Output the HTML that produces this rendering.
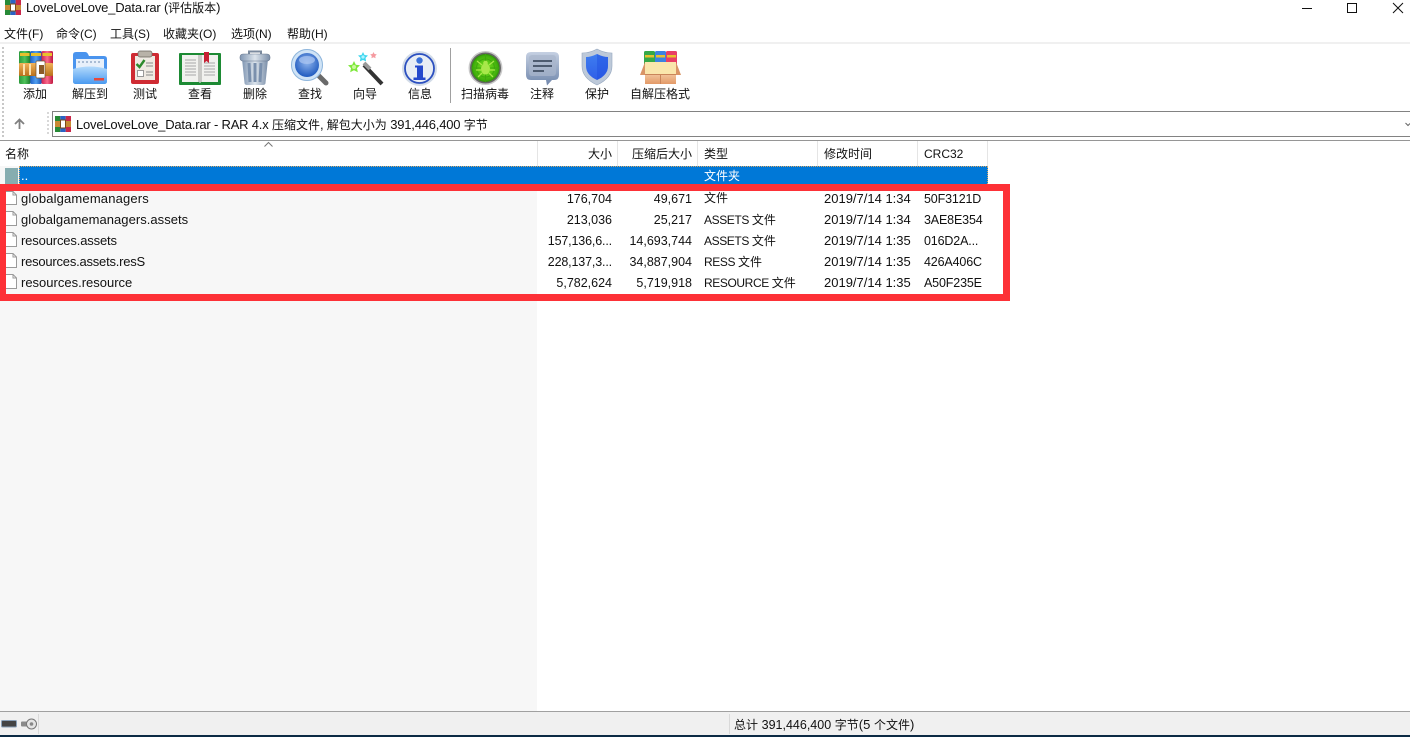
<!DOCTYPE html>
<html lang="zh">
<head>
<meta charset="utf-8">
<title>LoveLoveLove_Data.rar</title>
<style>
html,body{margin:0;padding:0;background:#fff;}
body{width:1410px;height:737px;position:relative;overflow:hidden;font-family:"Liberation Sans","Noto Sans CJK SC",sans-serif;font-size:13px;color:#111;}
.b{position:absolute;}
.t{position:absolute;white-space:nowrap;line-height:16px;height:16px;}
.c{font-size:12px;letter-spacing:0;}
.r{text-align:right;}
.n{font-size:12.5px;}
.k{font-size:12px;letter-spacing:-.4px;}
.h{font-size:12.5px;letter-spacing:-.15px;}
.tb{position:absolute;top:86px;font-size:12px;line-height:16px;text-align:center;white-space:nowrap;width:70px;}
svg{position:absolute;overflow:visible;}
</style>
</head>
<body>
<svg width="0" height="0" style="position:absolute">
<defs>
<linearGradient id="gG" x1="0" x2="1" y1="0" y2="0"><stop offset="0" stop-color="#2c9a3c"/><stop offset=".5" stop-color="#4fc35a"/><stop offset="1" stop-color="#1a7a2c"/></linearGradient>
<linearGradient id="gB" x1="0" x2="1" y1="0" y2="0"><stop offset="0" stop-color="#2060c8"/><stop offset=".5" stop-color="#50a0f0"/><stop offset="1" stop-color="#1a50b0"/></linearGradient>
<linearGradient id="gR" x1="0" x2="1" y1="0" y2="0"><stop offset="0" stop-color="#d02050"/><stop offset=".5" stop-color="#f86a8c"/><stop offset="1" stop-color="#c01840"/></linearGradient>
<linearGradient id="gO" x1="0" x2="0" y1="0" y2="1"><stop offset="0" stop-color="#f2b45a"/><stop offset="1" stop-color="#b8701c"/></linearGradient>
<linearGradient id="gF" x1="0" x2="0" y1="0" y2="1"><stop offset="0" stop-color="#b3dafc"/><stop offset="1" stop-color="#4a9af0"/></linearGradient>
<linearGradient id="gT" x1="0" x2="1" y1="0" y2="0"><stop offset="0" stop-color="#8096b2"/><stop offset=".5" stop-color="#dce4ec"/><stop offset="1" stop-color="#7a8ea8"/></linearGradient>
<radialGradient id="gL" cx=".5" cy=".4" r=".6"><stop offset="0" stop-color="#8fb4ec"/><stop offset="1" stop-color="#1f5abf"/></radialGradient>
<radialGradient id="gS" cx=".5" cy=".5" r=".55"><stop offset="0" stop-color="#7ce81e"/><stop offset=".8" stop-color="#3fae0c"/><stop offset="1" stop-color="#1f7005"/></radialGradient>
<linearGradient id="gC" x1="0" x2="0" y1="0" y2="1"><stop offset="0" stop-color="#c5d0e2"/><stop offset="1" stop-color="#6f86ab"/></linearGradient>
<linearGradient id="gP" x1="0" x2="0" y1="0" y2="1"><stop offset="0" stop-color="#3e7df0"/><stop offset="1" stop-color="#2f5fe8"/></linearGradient>
<linearGradient id="gX" x1="0" x2="0" y1="0" y2="1"><stop offset="0" stop-color="#f2c59c"/><stop offset="1" stop-color="#e39a68"/></linearGradient>
</defs>
</svg>

<!-- Title bar -->
<svg style="left:5px;top:0" width="16" height="15" viewBox="0 0 16 15">
<rect x="0" y="0" width="5.3" height="15" fill="#278a37"/><rect x="5.3" y="0" width="5.4" height="15" fill="#2a62c4"/><rect x="10.7" y="0" width="5.3" height="15" fill="#c9284a"/>
<rect x="0" y="5" width="16" height="5" fill="#c88a34"/><rect x="5.5" y="4" width="5" height="7" fill="#fff" stroke="#7a4a1a"/>
</svg>
<div class="t" style="left:26px;top:0;letter-spacing:-.2px">LoveLoveLove_Data.rar (<span class="c">评估版本</span>)</div>
<div class="b" style="left:1302px;top:8px;width:10px;height:1px;background:#111"></div>
<div class="b" style="left:1347px;top:3px;width:8px;height:8px;border:1px solid #111"></div>
<svg style="left:1393px;top:3px" width="10" height="10" viewBox="0 0 10 10"><path d="M0 0L10 10M10 0L0 10" stroke="#111" stroke-width="1" fill="none"/></svg>

<!-- Menu -->
<div class="t c" style="left:4px;top:26px">文件(F)</div>
<div class="t c" style="left:56px;top:26px">命令(C)</div>
<div class="t c" style="left:110px;top:26px">工具(S)</div>
<div class="t c" style="left:163px;top:26px">收藏夹(O)</div>
<div class="t c" style="left:231px;top:26px">选项(N)</div>
<div class="t c" style="left:287px;top:26px">帮助(H)</div>
<div class="b" style="left:0;top:42px;width:1410px;height:2px;background:#f0f0f0"></div>
<div class="b" style="left:2px;top:47px;height:90px;width:2px;background:repeating-linear-gradient(#c8c8c8 0 2px,transparent 2px 4px)"></div>
<div class="b" style="left:47px;top:112px;height:24px;width:2px;background:repeating-linear-gradient(#d8d8d8 0 2px,transparent 2px 4px)"></div>

<!-- Toolbar icons -->
<svg style="left:19px;top:51px" width="34" height="33" viewBox="0 0 34 33">
<rect x="0" y="0" width="11.5" height="33" rx="1.500" fill="url(#gG)"/><rect x="11.2" y="0" width="11.6" height="33" rx="1.500" fill="url(#gB)"/><rect x="22.500" y="0" width="11.5" height="33" rx="1.500" fill="url(#gR)"/>
<rect x="1" y="2" width="9.500" height="3" fill="#e7c02c"/><rect x="12" y="2" width="10" height="3" fill="#e7c02c"/><rect x="23.500" y="2" width="9.500" height="3" fill="#e7c02c"/>
<rect x="0" y="12" width="34" height="13" rx="1" fill="url(#gO)"/><rect x="17" y="10" width="9" height="17" rx="1" fill="#fff" stroke="#75502a" stroke-width=".7"/><rect x="20" y="14" width="5" height="9" fill="#8a5a28"/>
<rect x="4" y="13" width="2" height="11" fill="#fbe3b0"/><rect x="10" y="13" width="2" height="11" fill="#fbe3b0"/>
</svg>
<svg style="left:72px;top:51px" width="36" height="34" viewBox="0 0 36 34">
<path d="M1 4q0-3 3-3h9q2 0 3 2l1 2h15q3 0 3 3v22q0 3-3 3H4q-3 0-3-3z" fill="#4a94ee"/>
<rect x="4" y="8" width="28" height="12" fill="#e8f0fa"/>
<path d="M6 11h24" stroke="#a9bcd4" stroke-width="2" stroke-dasharray="2 2"/>
<path d="M1 18q17-5 34 0v12q0 3-3 3H4q-3 0-3-3z" fill="url(#gF)"/>
<rect x="22" y="27" width="10" height="2.500" fill="#e6483a"/>
</svg>
<svg style="left:131px;top:51px" width="28" height="33" viewBox="0 0 28 33">
<rect x="0" y="2" width="28" height="31" rx="2" fill="#cf2b33"/>
<rect x="4" y="5" width="20" height="24" fill="#efeae3"/>
<rect x="7" y="0" width="14" height="6" rx="2" fill="#b8b2a8" stroke="#6b665e" stroke-width=".7"/>
<path d="M5.500 13l3 3 5-7" stroke="#2d8a2d" stroke-width="2.400" fill="none"/>
<path d="M15 12h7M15 15h7" stroke="#8a8a8a" stroke-width="1"/>
<rect x="6.500" y="19.500" width="6" height="6" fill="#fff" stroke="#999"/>
<path d="M15 21h7M15 24h7" stroke="#8a8a8a" stroke-width="1"/>
</svg>
<svg style="left:179px;top:52px" width="42" height="33" viewBox="0 0 42 33">
<rect x="0" y="1" width="42" height="32" rx="1" fill="#1d8a34"/>
<path d="M3 3h17l1 1 1-1h17v27H22l-1 1-1-1H3z" fill="#f1f1ee"/>
<rect x="19" y="3" width="4" height="27" fill="#c9c9c6"/>
<path d="M6 8h11M6 11h11M6 14h11M6 17h11M6 20h11M6 23h11M25 11h11M25 14h11M25 17h11M25 20h11M25 23h11" stroke="#a8a8a8" stroke-width="1"/>
<path d="M25 0h5v11l-2.500-2-2.500 2z" fill="#c62033"/>
</svg>
<svg style="left:240px;top:50px" width="30" height="36" viewBox="0 0 30 36">
<path d="M9 5V1.500h12V5" fill="none" stroke="#7a8a9e" stroke-width="2"/>
<path d="M2 9h26l-2.500 24q0 2-3 2H7.500q-3 0-3-2z" fill="url(#gT)"/>
<rect x="0" y="4" width="30" height="7" rx="3" fill="url(#gT)" stroke="#6a7a90" stroke-width=".6"/>
<path d="M9 13l1 19M15 13v19M21 13l-1 19" stroke="#7a90ad" stroke-width="3"/>
</svg>
<svg style="left:291px;top:49px" width="38" height="37" viewBox="0 0 38 37">
<path d="M26 25l9 9" stroke="#6a6a6a" stroke-width="5" stroke-linecap="round"/>
<circle cx="16" cy="16" r="16" fill="#cfe3f6"/><circle cx="16" cy="16" r="15.500" fill="none" stroke="#8fb6dc"/>
<circle cx="16" cy="16" r="12" fill="url(#gL)"/>
<ellipse cx="16" cy="11" rx="8" ry="4" fill="#a9c4f0" opacity=".75"/>
</svg>
<svg style="left:348px;top:52px" width="37" height="34" viewBox="0 0 37 34">
<path d="M16 13l18 19" stroke="#333" stroke-width="4"/><path d="M16 11l6 6" stroke="#999" stroke-width="4"/>
<path d="M6 9l1.800 3.700 4.200.5-3 2.900.8 4.100L6 18.200l-3.800 2 .8-4.100-3-2.900 4.200-.5z" fill="#7de83a"/><circle cx="6" cy="15" r="2" fill="#c9f89a"/>
<path d="M15 0l1.500 3 3.500.5-2.500 2.400.6 3.500L15 8l-3.100 1.400.6-3.500L10 3.500l3.500-.5z" fill="#3ed6ee"/><circle cx="15" cy="5" r="1.600" fill="#aef3ff"/>
<path d="M25.500 0l1 2 2.300.4-1.600 1.600.4 2.200-2.100-1-2.100 1 .4-2.200-1.600-1.600 2.300-.4z" fill="#f59aa0"/>
</svg>
<svg style="left:402px;top:51px" width="35" height="35" viewBox="0 0 35 35">
<circle cx="17.500" cy="17.500" r="17.500" fill="#d3dce8"/><circle cx="17.500" cy="17.500" r="14.500" fill="#e8edf5" stroke="#2c50c0" stroke-width="1.800"/>
<circle cx="17.500" cy="9.500" r="3.200" fill="#3a70d8"/>
<path d="M13 14.500h8v12h2.500V29H11.500v-2.500H15v-10h-2z" fill="#2448cc"/>
</svg>
<div class="b" style="left:450px;top:48px;width:1px;height:55px;background:#a0a0a0"></div>
<svg style="left:468px;top:51px" width="35" height="34" viewBox="0 0 35 34">
<circle cx="17.500" cy="17" r="17" fill="#c8c8c8"/><circle cx="17.500" cy="17" r="15.500" fill="#666"/><circle cx="17.500" cy="17" r="14" fill="url(#gS)"/>
<path d="M17.500 3v28M3.500 17h28" stroke="#3fa70e" stroke-width="1"/><circle cx="17.500" cy="17" r="9" fill="none" stroke="#3fa70e"/>
<ellipse cx="17.500" cy="18" rx="4.500" ry="5.500" fill="#a8e84a"/><circle cx="17.500" cy="12" r="2.300" fill="#a8e84a"/>
<path d="M9 10l5 4M26 10l-5 4M8 19h5M27 19h-5M10 26l4-4M25 26l-4-4" stroke="#a8e84a" stroke-width="1.300"/>
</svg>
<svg style="left:526px;top:52px" width="33" height="34" viewBox="0 0 33 34">
<path d="M5 0h23q5 0 5 5v18q0 5-5 5h-2l-5 5.500-1-5.500H5q-5 0-5-5V5q0-5 5-5z" fill="url(#gC)"/>
<rect x="3" y="3" width="27" height="21" rx="3" fill="#a9b7cc" opacity=".7"/>
<path d="M7 9h19M7 14h19M7 19h11" stroke="#4d5b70" stroke-width="2"/>
</svg>
<svg style="left:582px;top:49px" width="30" height="36" viewBox="0 0 30 36">
<path d="M15 0q7 4 15 4v13q0 12-15 19Q0 29 0 17V4q8 0 15-4z" fill="#bdc9d9"/>
<path d="M15 0q7 4 15 4v13q0 12-15 19Q0 29 0 17V4q8 0 15-4z" fill="none" stroke="#95a7bf" stroke-width=".6"/>
<path d="M15 5q6 3 11 3v9q0 9-11 14Q4 26 4 17V8q5 0 11-3z" fill="url(#gP)"/>
<path d="M15 5v26q11-5 11-14V8q-5 0-11-3z" fill="#1f4de0" opacity=".45"/>
</svg>
<svg style="left:640px;top:51px" width="42" height="33" viewBox="0 0 42 33">
<rect x="4" y="0" width="11" height="14" rx="1.500" fill="#35a848"/><rect x="15" y="0" width="11" height="14" rx="1.500" fill="#3c82e0"/><rect x="26" y="0" width="11" height="14" rx="1.500" fill="#e83e66"/>
<rect x="5" y="4" width="9" height="2.500" fill="#e8c02c"/><rect x="16" y="4" width="9" height="2.500" fill="#e8c02c"/><rect x="27" y="4" width="9" height="2.500" fill="#e8c02c"/>
<path d="M5 11L0 24h6zM36 11l5 13h-6z" fill="#d99566"/>
<rect x="5" y="11" width="31" height="13" fill="#fae6ac"/>
<path d="M5 23h31v10H5z" fill="url(#gX)"/>
<path d="M5 23.500h31" stroke="#c9855a"/><path d="M20.500 23v10" stroke="#c9855a"/>
</svg>

<!-- Toolbar labels -->
<div class="tb" style="left:0">添加</div>
<div class="tb" style="left:55px">解压到</div>
<div class="tb" style="left:110px">测试</div>
<div class="tb" style="left:165px">查看</div>
<div class="tb" style="left:220px">删除</div>
<div class="tb" style="left:275px">查找</div>
<div class="tb" style="left:330px">向导</div>
<div class="tb" style="left:385px">信息</div>
<div class="tb" style="left:450px">扫描病毒</div>
<div class="tb" style="left:507px">注释</div>
<div class="tb" style="left:562px">保护</div>
<div class="tb" style="left:625px">自解压格式</div>

<!-- Address bar -->
<div class="b" style="left:52px;top:111px;width:1358px;height:1px;background:#828282"></div>
<div class="b" style="left:52px;top:111px;width:1px;height:26px;background:#828282"></div>
<div class="b" style="left:52px;top:136px;width:1358px;height:1px;background:#828282"></div>
<div class="b" style="left:0;top:140px;width:1410px;height:1px;background:#969696"></div>
<svg style="left:14px;top:118px" width="11" height="11" viewBox="0 0 11 11"><path d="M5.500 11V1.500M1 6l4.500-4.500L10 6" fill="none" stroke="#808080" stroke-width="1.800"/></svg>
<svg style="left:55px;top:116px" width="16" height="16" viewBox="0 0 16 16">
<rect x="0" y="0" width="5.300" height="16" fill="#278a37"/><rect x="5.300" y="0" width="5.400" height="16" fill="#2a62c4"/><rect x="10.700" y="0" width="5.300" height="16" fill="#c9284a"/>
<rect x="0" y="5" width="16" height="6" fill="#c88a34"/><rect x="5.500" y="4" width="5" height="8" fill="#fff" stroke="#7a4a1a"/>
</svg>
<div class="t" style="left:76px;top:117px;letter-spacing:-.2px">LoveLoveLove_Data.rar - RAR 4.x <span class="c">压缩文件</span>, <span class="c">解包大小为</span> 391,446,400 <span class="c">字节</span></div>
<svg style="left:1405px;top:122px" width="5" height="5" viewBox="0 0 5 5"><path d="M.5 1l2.500 2.500L5 1.500" fill="none" stroke="#666"/></svg>

<!-- Column headers -->
<div class="b" style="left:537px;top:141px;width:1px;height:25px;background:#e5e5e5"></div>
<div class="b" style="left:617px;top:141px;width:1px;height:25px;background:#e5e5e5"></div>
<div class="b" style="left:697px;top:141px;width:1px;height:25px;background:#e5e5e5"></div>
<div class="b" style="left:817px;top:141px;width:1px;height:25px;background:#e5e5e5"></div>
<div class="b" style="left:917px;top:141px;width:1px;height:25px;background:#e5e5e5"></div>
<div class="b" style="left:987px;top:141px;width:1px;height:25px;background:#e5e5e5"></div>
<svg style="left:264px;top:142px" width="9" height="5" viewBox="0 0 9 5"><path d="M.5 4.500l4-4 4 4" fill="none" stroke="#777"/></svg>
<div class="t c" style="left:5px;top:146px">名称</div>
<div class="t c r" style="right:798px;top:146px">大小</div>
<div class="t c r" style="right:718px;top:146px">压缩后大小</div>
<div class="t c" style="left:704px;top:146px">类型</div>
<div class="t c" style="left:824px;top:146px">修改时间</div>
<div class="t" style="left:924px;top:146px;font-size:12px">CRC32</div>

<!-- Left column tint -->
<div class="b" style="left:0;top:166px;width:537px;height:545px;background:#f7f7f7"></div>

<!-- Selected row -->
<div class="b" style="left:5px;top:168px;width:13px;height:16px;background:#86adb0"></div>
<div class="b" style="left:19px;top:166px;width:969px;height:18px;background:#0078d7;box-sizing:border-box;border:1px dotted #d8a868;border-bottom:0"></div>
<div class="t" style="left:21px;top:168px;color:#fff">..</div>
<div class="t c" style="left:704px;top:168px;color:#fff">文件夹</div>

<!-- Red highlight -->
<div class="b" style="left:0;top:184px;width:1010px;height:117px;box-sizing:border-box;border:solid #fd3137;border-width:7px 7px 7px 6px"></div>

<!-- File icons -->
<svg style="left:6px;top:191px" width="11" height="14" viewBox="0 0 11 14"><path d="M0 0.500h7l3.500 3.500v9.500H0" fill="#fff" stroke="#9a9a9a"/><path d="M7 .5v3.500h3.500" fill="none" stroke="#9a9a9a"/></svg>
<svg style="left:6px;top:211px" width="11" height="15" viewBox="0 0 11 15"><path d="M0 0.500h7l3.500 3.500v10.500H0" fill="#fff" stroke="#9a9a9a"/><path d="M7 .5v3.500h3.500" fill="none" stroke="#9a9a9a"/></svg>
<svg style="left:6px;top:232px" width="11" height="15" viewBox="0 0 11 15"><path d="M0 0.500h7l3.500 3.500v10.500H0" fill="#fff" stroke="#9a9a9a"/><path d="M7 .5v3.500h3.500" fill="none" stroke="#9a9a9a"/></svg>
<svg style="left:6px;top:253px" width="11" height="15" viewBox="0 0 11 15"><path d="M0 0.500h7l3.500 3.500v10.500H0" fill="#fff" stroke="#9a9a9a"/><path d="M7 .5v3.500h3.500" fill="none" stroke="#9a9a9a"/></svg>
<svg style="left:6px;top:274px" width="11" height="15" viewBox="0 0 11 15"><path d="M0 0.500h7l3.500 3.500v10.500H0" fill="#fff" stroke="#9a9a9a"/><path d="M7 .5v3.500h3.500" fill="none" stroke="#9a9a9a"/></svg>

<!-- Rows -->
<div class="t" style="left:21px;top:191px;letter-spacing:.16px">globalgamemanagers</div>
<div class="t n r" style="right:798px;top:191px">176,704</div>
<div class="t n r" style="right:718px;top:191px">49,671</div>
<div class="t c" style="left:704px;top:190px">文件</div>
<div class="t" style="left:824px;top:191px">2019/7/14 1:34</div>
<div class="t h" style="left:924px;top:191px">50F3121D</div>

<div class="t" style="left:21px;top:212px;letter-spacing:.04px">globalgamemanagers.assets</div>
<div class="t n r" style="right:798px;top:212px">213,036</div>
<div class="t n r" style="right:718px;top:212px">25,217</div>
<div class="t k" style="left:704px;top:212px">ASSETS <span class="c">文件</span></div>
<div class="t" style="left:824px;top:212px">2019/7/14 1:34</div>
<div class="t h" style="left:924px;top:212px">3AE8E354</div>

<div class="t" style="left:21px;top:233px;letter-spacing:-.15px">resources.assets</div>
<div class="t n r" style="right:798px;top:233px;letter-spacing:-.15px">157,136,6...</div>
<div class="t n r" style="right:718px;top:233px">14,693,744</div>
<div class="t k" style="left:704px;top:233px">ASSETS <span class="c">文件</span></div>
<div class="t" style="left:824px;top:233px">2019/7/14 1:35</div>
<div class="t h" style="left:924px;top:233px">016D2A...</div>

<div class="t" style="left:21px;top:254px;letter-spacing:-.22px">resources.assets.resS</div>
<div class="t n r" style="right:798px;top:254px;letter-spacing:-.15px">228,137,3...</div>
<div class="t n r" style="right:718px;top:254px">34,887,904</div>
<div class="t k" style="left:704px;top:254px">RESS <span class="c">文件</span></div>
<div class="t" style="left:824px;top:254px">2019/7/14 1:35</div>
<div class="t h" style="left:924px;top:254px">426A406C</div>

<div class="t" style="left:21px;top:275px">resources.resource</div>
<div class="t n r" style="right:798px;top:275px">5,782,624</div>
<div class="t n r" style="right:718px;top:275px">5,719,918</div>
<div class="t k" style="left:704px;top:275px">RESOURCE <span class="c">文件</span></div>
<div class="t" style="left:824px;top:275px">2019/7/14 1:35</div>
<div class="t h" style="left:924px;top:275px">A50F235E</div>

<!-- Status bar -->
<div class="b" style="left:0;top:711px;width:1410px;height:1px;background:#a0a0a0"></div>
<div class="b" style="left:0;top:712px;width:1410px;height:23px;background:#f0f0f0"></div>
<div class="b" style="left:0;top:735px;width:1410px;height:2px;background:#0c2a44"></div>
<div class="b" style="left:38px;top:714px;width:1px;height:20px;background:#d9d9d9"></div>
<div class="b" style="left:729px;top:714px;width:1px;height:20px;background:#d9d9d9"></div>
<svg style="left:1px;top:719px" width="36" height="11" viewBox="0 0 36 11">
<rect x=".5" y="1.500" width="15" height="6.500" rx="1" fill="#444" stroke="#8aa0b8"/>
<path d="M20 3.500q0-1 1-1h7v5h-7q-1 0-1-1z" fill="#8a8a8a"/><circle cx="30.500" cy="5" r="5" fill="#e4e4e4" stroke="#777"/><circle cx="30.500" cy="5" r="1.800" fill="#888"/>
</svg>
<div class="t" style="left:734px;top:717px"><span class="c">总计</span> <span class="n">391,446,400</span> <span class="c">字节</span>(5 <span class="c">个文件</span>)</div>
</body>
</html>
